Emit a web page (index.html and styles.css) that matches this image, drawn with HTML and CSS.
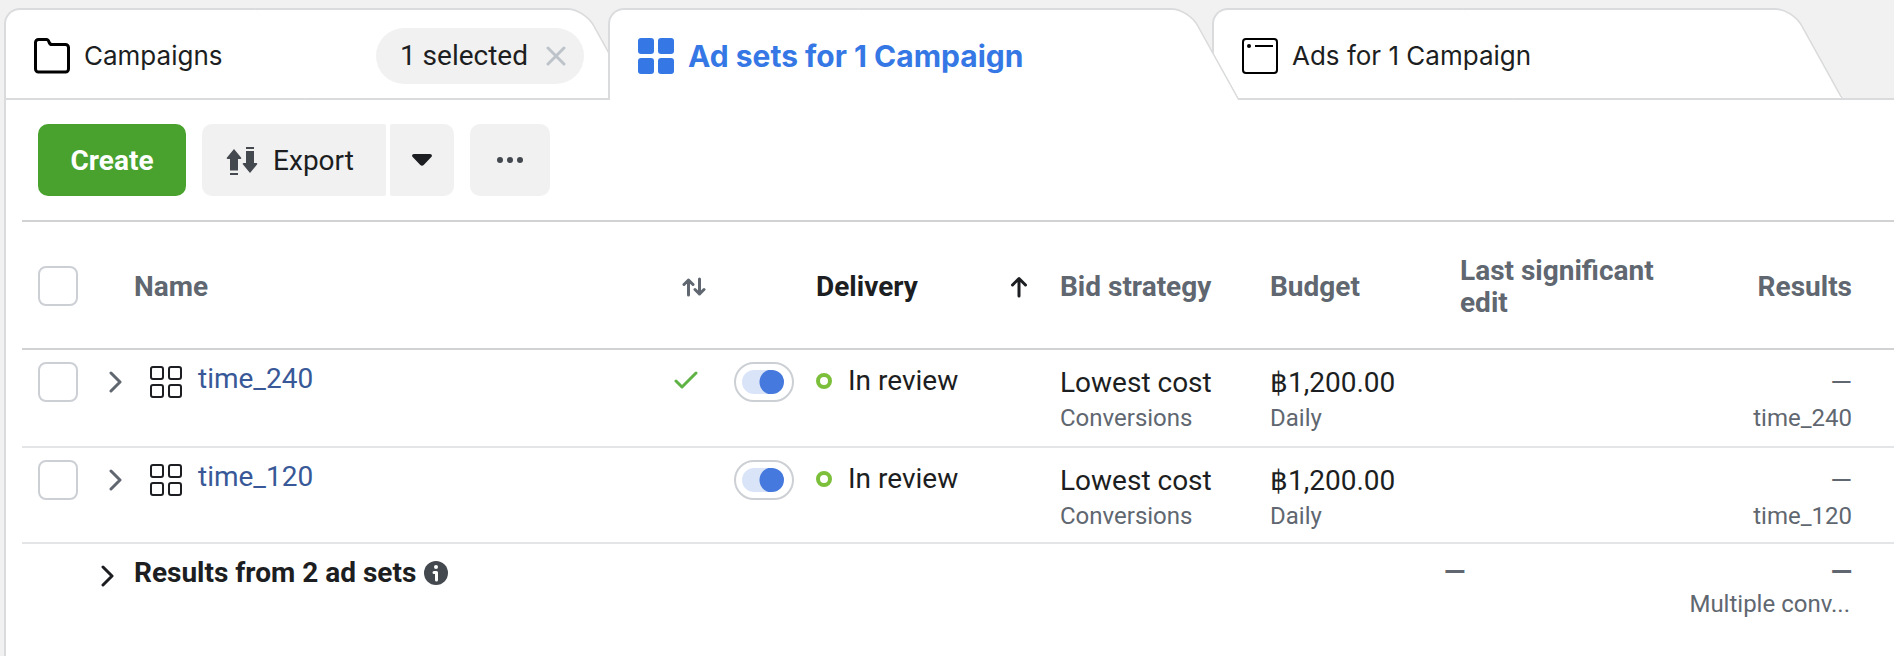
FILE: index.html
```html
<!DOCTYPE html>
<html lang="en">
<head>
<meta charset="utf-8">
<title>Ad sets</title>
<link rel="stylesheet" href="styles.css">
</head>
<body>
<svg class="sprite" aria-hidden="true">
  <symbol id="chevron" viewBox="0 0 14 24"><path d="M2 3l9 9-9 9" fill="none" stroke="currentColor" stroke-width="3" stroke-linecap="round" stroke-linejoin="round"/></symbol>
  <symbol id="grid" viewBox="0 0 34 34"><g fill="none" stroke="currentColor" stroke-width="2"><rect x="2" y="2" width="12" height="12" rx="2"/><rect x="20" y="2" width="12" height="12" rx="2"/><rect x="2" y="20" width="12" height="12" rx="2"/><rect x="20" y="20" width="12" height="12" rx="2"/></g></symbol>
</svg>
<nav class="tabs">
  <div class="tab">
    <a class="tab-link" href="#campaigns">
      <svg class="tab-icon" viewBox="0 0 36 36"><path d="M1.500 31V4.500a3 3 0 0 1 3-3h8c1.500 0 2 1 2.500 2.500C15.500 5.800 16 6.500 18 6.500h13.500a3 3 0 0 1 3 3V31a3 3 0 0 1-3 3h-27a3 3 0 0 1-3-3z" fill="none" stroke="#000" stroke-width="3"/></svg>
      <span>Campaigns</span>
    </a>
    <span class="pill">1 selected
      <button class="pill-close" type="button" aria-label="Clear selection"><svg viewBox="0 0 20 20"><path d="M2 2l16 16M18 2L2 18" stroke="#bec3c9" stroke-width="3" stroke-linecap="round"/></svg></button>
    </span>
  </div>
  <div class="tab active">
    <a class="tab-link" href="#adsets" aria-current="page">
      <svg class="tab-icon" viewBox="0 0 36 36" fill="#3578e5"><rect width="16" height="16" rx="3"/><rect x="20" width="16" height="16" rx="3"/><rect y="20" width="16" height="16" rx="3"/><rect x="20" y="20" width="16" height="16" rx="3"/></svg>
      <span>Ad sets for 1 Campaign</span>
    </a>
  </div>
  <div class="tab">
    <a class="tab-link" href="#ads">
      <svg class="tab-icon" viewBox="0 0 36 36"><rect x="1" y="1" width="34" height="34" rx="3" fill="none" stroke="#000" stroke-width="2"/><circle cx="7" cy="8" r="2"/><path d="M13 8h18" stroke="#000" stroke-width="2"/></svg>
      <span>Ads for 1 Campaign</span>
    </a>
  </div>
</nav>
<main class="panel">
  <div class="toolbar">
    <button class="btn create" type="button">Create</button>
    <div class="split">
      <button class="btn export" type="button">
        <svg class="export-icon" viewBox="0 0 32 28" fill="#444950"><path d="M8 2l7 8.500c.6.700.3 1.500-.7 1.500H12v11.500H4V12H1.700c-1 0-1.300-.8-.7-1.500zM4 26h8v2H4zM20 0h8v2h-8zM24 26l-7-8.500c-.6-.7-.3-1.500.7-1.500H20V4h8v12h2.300c1 0 1.300.8.7 1.500z"/></svg>
        Export
      </button>
      <button class="btn caret" type="button" aria-label="Export options"><svg class="caret-icon" viewBox="0 0 20 12"><path d="M2 0h16c1.800 0 2.500 1.800 1.300 3l-7.600 8c-1 1-2.400 1-3.400 0L.7 3C-.5 1.800.2 0 2 0z" fill="#1c1e21"/></svg></button>
    </div>
    <button class="btn more" type="button" aria-label="More"><svg class="more-icon" viewBox="0 0 28 8" fill="#444950"><circle cx="4" cy="4" r="3"/><circle cx="14" cy="4" r="3"/><circle cx="24" cy="4" r="3"/></svg></button>
  </div>
  <table class="grid">
    <colgroup><col class="c-check"><col><col class="c-toggle"><col class="c-delivery"><col class="c-bid"><col class="c-budget"><col class="c-edit"><col class="c-results"></colgroup>
    <thead>
      <tr>
        <th class="check"><input class="box" type="checkbox" aria-label="Select all"></th>
        <th class="name-head"><div class="head">Name
          <svg class="sort-icon" viewBox="0 0 24 20"><path d="M6.500 18V3M2 7.500L6.500 3 11 7.500M17.500 2v15M13 12.500l4.500 4.500 4.500-4.500" fill="none" stroke="#606770" stroke-width="3" stroke-linecap="round" stroke-linejoin="round"/></svg></div></th>
        <th></th>
        <th class="sorted"><div class="head">Delivery
          <svg class="up-icon" viewBox="0 0 18 22"><path d="M9 20V3M2.500 9L9 2.500 15.500 9" fill="none" stroke="#1c1e21" stroke-width="3" stroke-linecap="round" stroke-linejoin="round"/></svg></div></th>
        <th>Bid strategy</th>
        <th>Budget</th>
        <th>Last significant edit</th>
        <th class="results">Results</th>
      </tr>
    </thead>
    <tbody>
      <tr>
        <td class="check"><input class="box" type="checkbox" aria-label="Select time_240"></td>
        <td class="name"><div class="name-row">
          <button class="expand" type="button" aria-label="Expand time_240"><svg><use href="#chevron"/></svg></button>
          <svg class="set-icon"><use href="#grid"/></svg>
          <a href="#time_240">time_240</a>
          <svg class="done-icon" viewBox="0 0 24 18"><path d="M2 10l6 6L22 2" fill="none" stroke="#5eb344" stroke-width="3" stroke-linecap="round" stroke-linejoin="round"/></svg>
        </div></td>
        <td class="toggle"><input class="switch" type="checkbox" role="switch" checked aria-label="time_240 on"></td>
        <td class="delivery"><span class="status">In review</span></td>
        <td>Lowest cost<div class="sub">Conversions</div></td>
        <td>฿1,200.00<div class="sub">Daily</div></td>
        <td></td>
        <td class="results">—<div class="sub">time_240</div></td>
      </tr>
      <tr>
        <td class="check"><input class="box" type="checkbox" aria-label="Select time_120"></td>
        <td class="name"><div class="name-row">
          <button class="expand" type="button" aria-label="Expand time_120"><svg><use href="#chevron"/></svg></button>
          <svg class="set-icon"><use href="#grid"/></svg>
          <a href="#time_120">time_120</a>
        </div></td>
        <td class="toggle"><input class="switch" type="checkbox" role="switch" checked aria-label="time_120 on"></td>
        <td class="delivery"><span class="status">In review</span></td>
        <td>Lowest cost<div class="sub">Conversions</div></td>
        <td>฿1,200.00<div class="sub">Daily</div></td>
        <td></td>
        <td class="results">—<div class="sub">time_120</div></td>
      </tr>
    </tbody>
    <tfoot>
      <tr>
        <td></td>
        <td class="total" colspan="5"><div class="total-row">
          <button class="expand" type="button" aria-label="Expand results"><svg><use href="#chevron"/></svg></button>
          <span>Results from 2 ad sets</span>
          <svg class="info-icon" viewBox="0 0 24 24"><circle cx="12" cy="12" r="12" fill="#444950"/><circle cx="12" cy="6" r="2" fill="#fff"/><path d="M10 11.500h2.500V19" fill="none" stroke="#fff" stroke-width="3" stroke-linecap="round" stroke-linejoin="round"/></svg>
        </div></td>
        <td class="total-edit">—</td>
        <td class="results"><b>—</b><div class="sub">Multiple conv...</div></td>
      </tr>
    </tfoot>
  </table>
</main>
</body>
</html>
```
FILE: styles.css
```css
*, *::before, *::after { box-sizing: border-box; }
html { height: 100%; }
body {
  margin: 0;
  min-height: 100%;
  display: flex;
  flex-direction: column;
  background: #f1f1f1;
  color: #1c1e21;
  font: 28px/32px Roboto, "Noto Sans", sans-serif;
  overflow-x: hidden;
}
button { font: inherit; color: inherit; border: 0; padding: 0; background: none; }
svg { display: block; flex: none; }
.sprite { position: absolute; width: 0; height: 0; }

.tabs {
  display: flex;
  padding: 8px 0 0 4px;
  background: linear-gradient(#dadbdd, #dadbdd) right bottom / calc(100% - 4px) 2px no-repeat;
}
.tab {
  position: relative;
  z-index: 1;
  flex: 0 1 604px;
  height: 92px;
  display: flex;
  align-items: center;
  justify-content: space-between;
  padding: 4px 24px 0 30px;
}
.tab::before, .tab::after {
  content: "";
  position: absolute;
  z-index: -1;
  top: 0;
  bottom: 0;
  background: #fff;
  border: 2px solid #dadbdd;
}
.tab::before { left: 0; right: 80px; border-right: 0; border-top-left-radius: 16px; }
.tab::after {
  left: 50%;
  right: -28px;
  border-left: 0;
  border-top-right-radius: 18px;
  transform: skewX(29deg);
  transform-origin: bottom right;
}
.tab.active { z-index: 2; }
.tab.active::before, .tab.active::after { border-bottom: 0; }
.tab-link {
  display: flex;
  align-items: center;
  gap: 14px;
  color: inherit;
  text-decoration: none;
  font-family: Inter, Roboto, sans-serif;
  font-size: 26px;
}
.active .tab-link { color: #3578e5; font-size: 30px; font-weight: 700; }
.tab-icon { width: 36px; height: 36px; }
.pill {
  display: flex;
  align-items: center;
  gap: 18px;
  height: 56px;
  padding: 0 18px 0 24px;
  border-radius: 28px;
  background: #f1f1f1;
}
.pill-close svg { width: 20px; height: 20px; }

.panel {
  flex: 1;
  margin-left: 4px;
  padding-left: 16px;
  border-left: 2px solid #dadbdd;
  background: #fff;
}
.toolbar { display: flex; gap: 16px; padding: 24px 16px; }
.btn {
  display: flex;
  align-items: center;
  justify-content: center;
  height: 72px;
  border-radius: 10px;
  background: #f1f1f1;
}
.create { width: 148px; padding-top: 2px; background: #49a22e; color: #fff; font-weight: 700; }
.split { display: flex; gap: 4px; }
.export { width: 184px; gap: 15px; padding: 2px 8px 0 0; border-radius: 10px 2px 2px 10px; }
.caret { width: 64px; border-radius: 2px 10px 10px 2px; }
.more { width: 80px; }
.export-icon { width: 32px; height: 28px; }
.caret-icon { width: 20px; height: 12px; }
.more-icon { width: 28px; height: 8px; }

.grid { width: 100%; table-layout: fixed; border-collapse: separate; border-spacing: 0; }
.c-check { width: 79px; }
.c-toggle { width: 78px; }
.c-delivery { width: 244px; }
.c-bid { width: 210px; }
.c-budget { width: 190px; }
.c-edit { width: 226px; }
.c-results { width: 224px; }
th, td { padding: 17px 0 8px 16px; text-align: left; vertical-align: top; }
th {
  height: 130px;
  padding: 4px 0 0 16px;
  vertical-align: middle;
  color: #606770;
  font-weight: 700;
  border: solid #d1d2d4;
  border-width: 2px 0;
}
th.check { padding-top: 2px; }
tbody td { height: 96px; border-bottom: 2px solid #e4e5e6; }
tbody tr:first-child td { height: 98px; }
.head { display: flex; align-items: center; justify-content: space-between; padding-right: 16px; }
th.name-head { padding-left: 33px; }
.sorted { color: #1c1e21; }
.sort-icon { width: 24px; height: 20px; }
.up-icon { width: 18px; height: 22px; }
th.results, td.results { text-align: right; padding-right: 42px; }
td.results, .total-edit { color: #606770; }
.sub { margin-top: 3px; color: #606770; font-size: 24px; }

.box {
  appearance: none;
  display: block;
  width: 40px;
  height: 40px;
  margin: 0;
  border: 2px solid #ccd0d5;
  border-radius: 8px;
  background: #fff;
}
td.check, td.toggle { padding-top: 12px; }
td.name { padding: 13px 0 0 8px; }
.name-row { display: flex; align-items: flex-start; padding-right: 24px; }
.name-row a { color: #385898; text-decoration: none; margin-left: 15px; }
.expand svg { width: 14px; height: 24px; }
.name-row .expand { margin-top: 7px; color: #606770; }
.set-icon { width: 34px; height: 34px; margin: 2px 0 0 26px; }
.done-icon { width: 24px; height: 18px; margin: 8px 0 0 auto; }
td.toggle { padding-left: 12px; }
.switch {
  appearance: none;
  display: flex;
  width: 60px;
  height: 40px;
  margin: 0;
  padding: 6px 8px 6px 6px;
  border: 2px solid #ccd0d5;
  border-radius: 20px;
  background: #fff;
}
.switch::before {
  content: "";
  flex: 1;
  border-radius: 12px;
  background: radial-gradient(circle at calc(100% - 12px) 50%, #4579dd 12px, #dae4f8 13px);
}
td.delivery { padding-top: 15px; }
.status { display: flex; align-items: center; gap: 16px; }
.status::before { content: ""; width: 16px; height: 16px; border: 4px solid #7bbf3a; border-radius: 50%; }

tfoot td { padding-top: 12px; }
tfoot td.total { padding-top: 13px; padding-left: 0; font-weight: 700; }
.total-row { display: flex; align-items: center; }
.total-row .expand { padding-top: 6px; }
.total-row span { margin: 0 8px 0 19px; }
.info-icon { width: 24px; height: 24px; }
tfoot td.total-edit { padding-left: 0; font-weight: 700; }
tfoot .sub { margin-top: 0; padding-right: 2px; }
```
